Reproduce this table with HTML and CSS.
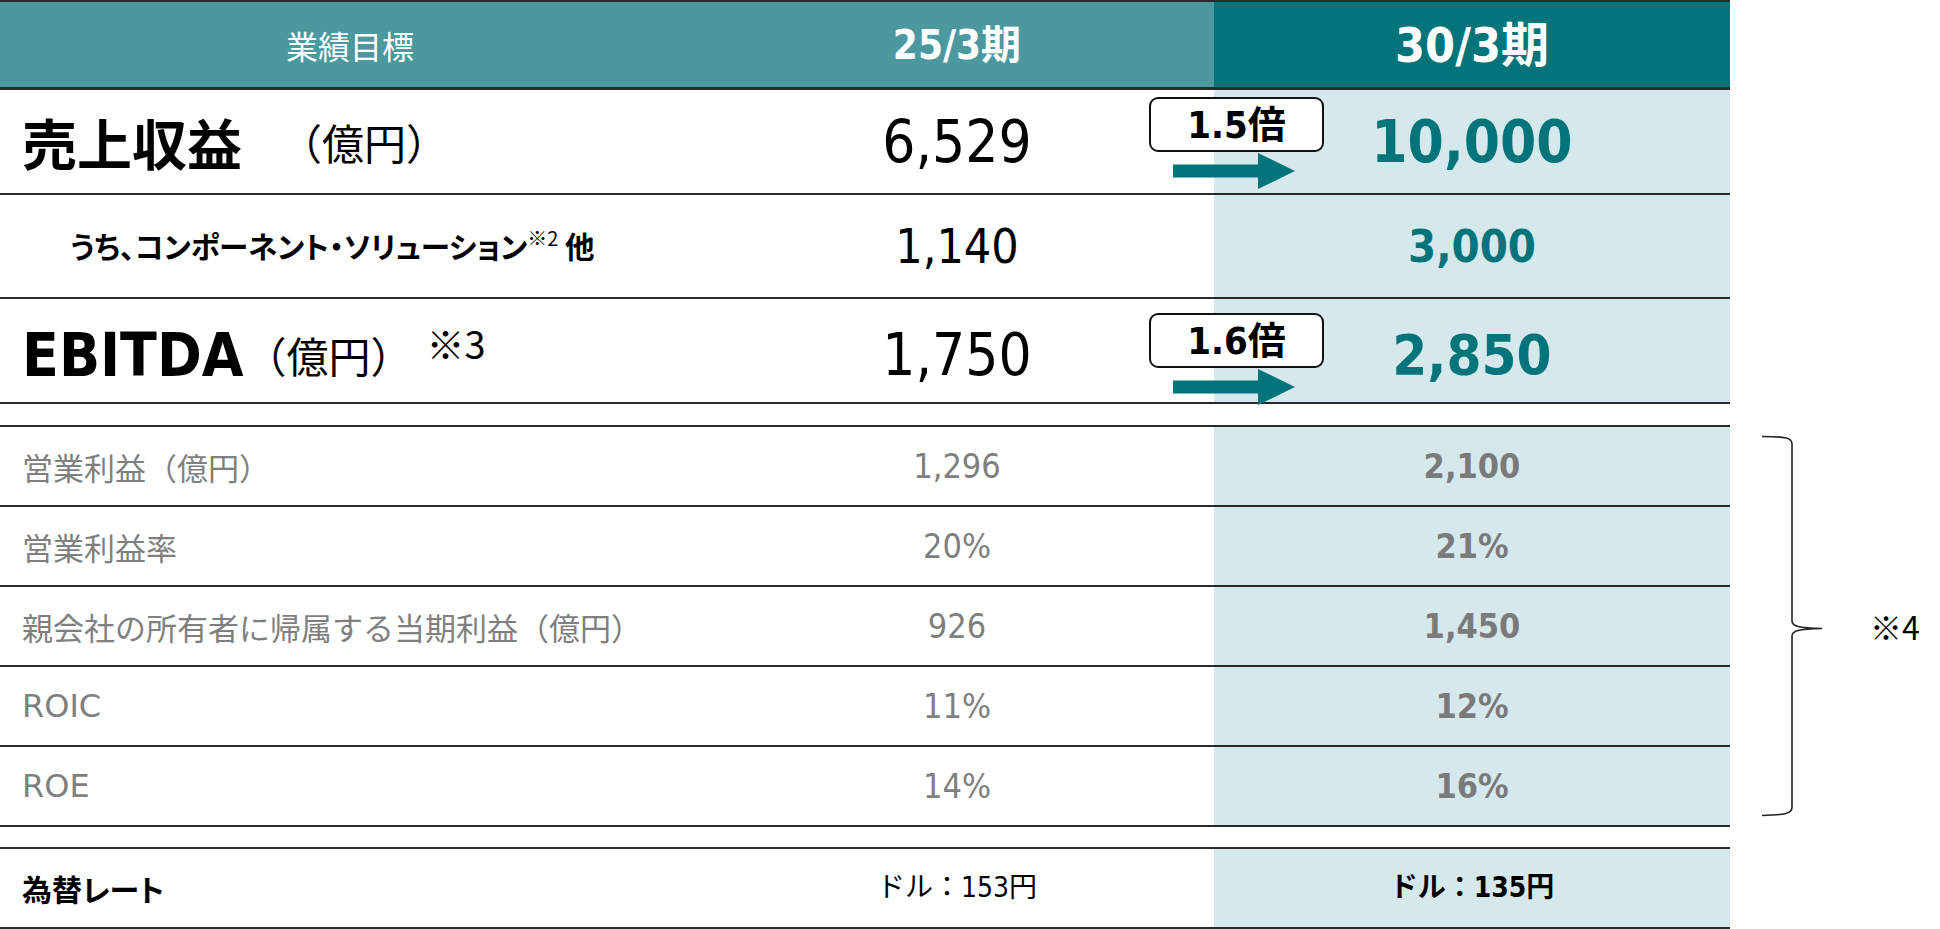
FILE: index.html
```html
<!DOCTYPE html>
<html lang="ja">
<head>
<meta charset="utf-8">
<title>業績目標</title>
<link rel="stylesheet" href="styles.css">
</head>
<body>
<main class="sheet">
  <section class="block">
    <div class="tbl">
      <div class="row head">
        <div class="cell head-label">業績目標</div>
        <div class="cell head-prev">25/3期</div>
        <div class="cell head-now">30/3期</div>
      </div>
      <div class="row r-rev">
        <div class="cell label"><span class="big">売上収益</span><span class="unit unit-rev">（億円）</span></div>
        <div class="cell num-lg">6,529</div>
        <div class="cell target num-lg-b">10,000</div>
        <div class="growth g-rev">
          <div class="badge">1.5倍</div>
          <svg class="arrow" width="122" height="36" viewBox="0 0 122 36"><polygon points="0,11.5 85,11.5 85,0 122,18 85,36 85,24.5 0,24.5" fill="#03747A"/></svg>
        </div>
      </div>
      <div class="row r-sub">
        <div class="cell label sub-label">うち、コンポーネント・ソリューション<span class="note-sm">※2</span>&nbsp;他</div>
        <div class="cell num-md">1,140</div>
        <div class="cell target num-md-b">3,000</div>
      </div>
      <div class="row r-ebit">
        <div class="cell label"><span class="big-latin">EBITDA</span><span class="unit unit-ebit">（億円）</span><span class="note">※3</span></div>
        <div class="cell num-lg">1,750</div>
        <div class="cell target num-lg-b ebit-val">2,850</div>
        <div class="growth g-ebit">
          <div class="badge">1.6倍</div>
          <svg class="arrow" width="122" height="36" viewBox="0 0 122 36"><polygon points="0,11.5 85,11.5 85,0 122,18 85,36 85,24.5 0,24.5" fill="#03747A"/></svg>
        </div>
      </div>
    </div>
  </section>

  <section class="block kpi">
    <div class="tbl">
      <div class="row r-kpi">
        <div class="cell label kpi-label">営業利益（億円）</div>
        <div class="cell kpi-val">1,296</div>
        <div class="cell target kpi-target">2,100</div>
      </div>
      <div class="row r-kpi">
        <div class="cell label kpi-label">営業利益率</div>
        <div class="cell kpi-val">20%</div>
        <div class="cell target kpi-target">21%</div>
      </div>
      <div class="row r-kpi">
        <div class="cell label kpi-label">親会社の所有者に帰属する当期利益（億円）</div>
        <div class="cell kpi-val">926</div>
        <div class="cell target kpi-target">1,450</div>
      </div>
      <div class="row r-kpi">
        <div class="cell label kpi-label kpi-latin">ROIC</div>
        <div class="cell kpi-val">11%</div>
        <div class="cell target kpi-target">12%</div>
      </div>
      <div class="row r-kpi last">
        <div class="cell label kpi-label kpi-latin">ROE</div>
        <div class="cell kpi-val">14%</div>
        <div class="cell target kpi-target">16%</div>
      </div>
    </div>
    <div class="side">
      <svg class="brace" width="62" height="382" viewBox="0 0 62 382"><path d="M0,1.5 C22,1.5 30,2.5 30,9 L30,186 C30,191 36,193 60,193.5 C36,194 30,196 30,201 L30,372 C30,379 22,380 0,380.5" fill="none" stroke="#222" stroke-width="1.6"/></svg>
      <span class="side-note">※4</span>
    </div>
  </section>

  <section class="block fx">
    <div class="tbl">
      <div class="row r-fx">
        <div class="cell label fx-label">為替レート</div>
        <div class="cell fx-val">ドル：153円</div>
        <div class="cell target fx-target">ドル：135円</div>
      </div>
    </div>
  </section>
</main>
</body>
</html>
```
FILE: styles.css
```css
* { box-sizing: content-box; }

body {
  margin: 0;
  background: #ffffff;
  color: #000000;
  font-family: "DejaVu Sans Condensed", "DejaVu Sans", "Noto Sans CJK JP", sans-serif;
}

.sheet {
  width: 1940px;
}

.block {
  display: flex;
  align-items: stretch;
}

.tbl {
  width: 1730px;
  flex: none;
}

.row {
  display: grid;
  grid-template-columns: 700px 514px 516px;
  border-top: 2px solid #2a2a2a;
  position: relative;
}

.cell {
  display: flex;
  align-items: center;
  justify-content: center;
  line-height: 1;
  white-space: nowrap;
}

.label {
  justify-content: flex-start;
  padding-left: 22px;
}

.target {
  background: #D5E9EC;
  color: #03747A;
  font-weight: bold;
}

/* header */
.head {
  height: 85px;
  color: #ffffff;
}
.head-label,
.head-prev {
  background: #4B999E;
}
.head-now {
  background: #03747A;
}
.head-label {
  font-family: "Noto Sans CJK JP", sans-serif;
  font-size: 32px;
  font-weight: normal;
}
.head-prev {
  font-size: 40px;
  font-weight: bold;
}
.head-now {
  font-size: 48px;
  font-weight: bold;
}

/* main rows */
.r-rev {
  height: 103px;
  border-top-width: 3px;
}
.r-sub {
  height: 102px;
}
.r-ebit {
  height: 103px;
  border-bottom: 2px solid #2a2a2a;
}
.r-ebit .cell {
  padding-top: 8px;
  box-sizing: border-box;
}

.big {
  font-family: "Noto Sans CJK JP", sans-serif;
  font-weight: bold;
  font-size: 55px;
}
.big-latin {
  font-weight: bold;
  font-size: 60px;
}
.unit {
  font-family: "Noto Sans CJK JP", sans-serif;
  font-size: 42px;
}
.unit-rev {
  margin-left: 38px;
}
.unit-ebit {
  margin-left: 1px;
}
.note {
  font-family: "Noto Sans CJK JP", sans-serif;
  font-size: 38px;
  margin-left: 14px;
  position: relative;
  top: -12px;
}

.sub-label {
  font-family: "Noto Sans CJK JP", sans-serif;
  font-feature-settings: "palt";
  font-weight: bold;
  font-size: 29.5px;
  padding-left: 70px;
}
.note-sm {
  font-weight: normal;
  font-size: 20px;
  position: relative;
  top: -8px;
  margin-left: 0;
}

.num-lg {
  font-size: 58px;
}
.num-lg-b {
  font-size: 58px;
}
.ebit-val {
  font-size: 56px;
}
.num-md {
  font-size: 48px;
}
.num-md-b {
  font-size: 45px;
}

/* growth badges */
.growth {
  position: absolute;
  left: 1149px;
  width: 175px;
}
.g-rev {
  top: 7px;
}
.g-ebit {
  top: 14px;
}
.badge {
  box-sizing: border-box;
  height: 55px;
  border: 2px solid #111111;
  border-radius: 9px;
  background: #ffffff;
  display: flex;
  align-items: center;
  justify-content: center;
  font-weight: bold;
  font-size: 38px;
  line-height: 1;
}
.arrow {
  display: block;
  margin: 1px 0 0 24px;
}

/* kpi rows */
.kpi {
  margin-top: 21px;
}
.r-kpi {
  height: 78px;
}
.r-kpi.last {
  border-bottom: 2px solid #2a2a2a;
}
.kpi-label {
  font-family: "Noto Sans CJK JP", sans-serif;
  font-size: 31px;
  color: #7F7F7F;
}
.kpi-latin {
  font-family: "DejaVu Sans", sans-serif;
  font-size: 32px;
}
.kpi-val {
  font-size: 34px;
  color: #7F7F7F;
}
.kpi-target {
  font-size: 34px;
  color: #7A7A7A;
}

.side {
  display: flex;
  align-items: center;
  padding-left: 32px;
}
.brace {
  display: block;
}
.side-note {
  margin-left: 46px;
  font-family: "Noto Sans CJK JP", sans-serif;
  font-size: 32px;
}

/* fx row */
.fx {
  margin-top: 20px;
}
.r-fx {
  height: 78px;
  border-bottom: 2px solid #2a2a2a;
}
.fx-label {
  font-family: "Noto Sans CJK JP", sans-serif;
  font-feature-settings: "palt";
  font-weight: bold;
  font-size: 30px;
}
.fx-val {
  font-size: 28px;
}
.fx-target {
  font-size: 28px;
  color: #000000;
}
```
